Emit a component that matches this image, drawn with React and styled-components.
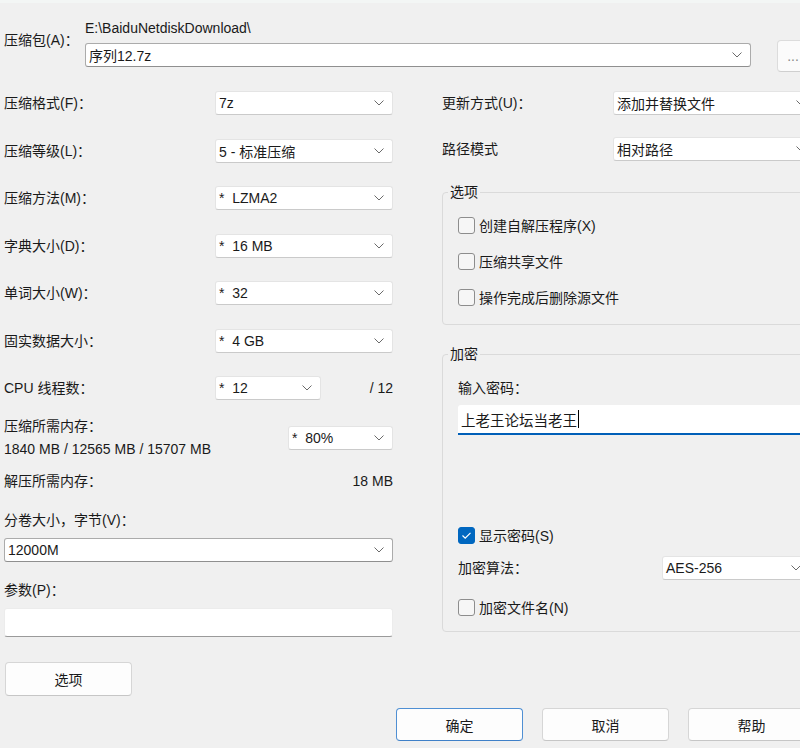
import styled, { createGlobalStyle } from 'styled-components';

const GlobalStyle = createGlobalStyle`
    html, body {
        margin: 0;
        padding: 0;
        overflow: hidden;
        background: #f0f0f0;
    }
    body {
        font-family: "Liberation Sans", "Noto Sans CJK SC", sans-serif;
        font-size: 14px;
        color: #1a1a1a;
    }
`;

const Dialog = styled.div`
    box-sizing: border-box;
    width: 830px;
    height: 748px;
    padding: 0 15px 0 4px;
    display: flex;
    flex-direction: column;
`;

const TitleStrip = styled.div`
    height: 3px;
    margin: 0 -15px 0 -4px;
    background: #f3f6f5;
`;

const TopRow = styled.div`
    display: flex;
    align-items: flex-start;
    margin-top: 16px;

    > * {
        flex-shrink: 0;
    }
`;

const TopLabel = styled.div`
    width: 81px;
    margin-top: 12px;
    line-height: 18px;
`;

const PathField = styled.div`
    width: 666px;
    display: flex;
    flex-direction: column;
    gap: 6px;
`;

const PathText = styled.div`
    line-height: 18px;
`;

const BrowseButton = styled.button`
    box-sizing: border-box;
    margin: 21px 0 0 26px;
    width: 32px;
    height: 32px;
    padding: 0;
    background: #fbfbfb;
    border: 1px solid #dcdcdc;
    border-bottom-color: #cfcfcf;
    border-radius: 4px;
    color: #8a8a8a;
    font: inherit;
`;

const Main = styled.div`
    display: flex;
    column-gap: 49px;
    margin-top: 19px;
`;

const LeftColumn = styled.div`
    width: 389px;
    display: flex;
    flex-direction: column;
`;

const RightColumn = styled.div`
    flex: 1;
    display: flex;
    flex-direction: column;
`;

const FieldRows = styled.div`
    display: flex;
    flex-direction: column;
    gap: ${(p) => p.$gap}px;
`;

const FieldRow = styled.div`
    display: grid;
    grid-template-columns: ${(p) => p.$cols};
    align-items: center;
    height: 24px;
    margin-top: ${(p) => p.$mt || 0}px;
`;

const Label = styled.div`
    line-height: 20px;
    white-space: nowrap;
    margin-top: ${(p) => p.$mt || 0}px;
    text-align: ${(p) => (p.$right ? 'right' : 'left')};
`;

const MemoryRow = styled.div`
    display: flex;
    align-items: center;
    justify-content: space-between;
    margin-top: 14.5px;
`;

const MemoryText = styled.div`
    line-height: 23px;
`;

const InfoRow = styled.div`
    display: flex;
    justify-content: space-between;
    line-height: 20px;
    margin-top: 10.5px;
`;

const ComboBox = styled.div`
    box-sizing: border-box;
    height: 24px;
    width: ${(p) => (p.$width ? `${p.$width}px` : '100%')};
    margin-top: ${(p) => p.$mt || 0}px;
    display: flex;
    align-items: center;
    justify-content: space-between;
    padding: 0 8px 0 3px;
    background: #ffffff;
    border: 1px solid ${(p) => (p.$editable ? '#ababab' : '#e4e4e4')};
    border-bottom-color: ${(p) => (p.$editable ? '#8f8f8f' : '#cacaca')};
    border-radius: 3px;
    justify-self: end;

    span {
        white-space: pre;
    }
`;

const TextInput = styled.div`
    box-sizing: border-box;
    height: 29px;
    margin-top: 8px;
    background: #ffffff;
    border: 1px solid #ececec;
    border-bottom-color: #9a9a9a;
    border-radius: 3px;
`;

const PasswordInput = styled.div`
    box-sizing: border-box;
    height: 30px;
    margin-top: 7px;
    padding-left: 3px;
    display: flex;
    align-items: center;
    background: #ffffff;
    border-bottom: 2px solid #005fb8;
    border-radius: 3px 3px 0 0;
    font-size: 14.5px;
`;

const Caret = styled.span`
    display: inline-block;
    width: 1px;
    height: 18px;
    margin-left: 1px;
    background: #000000;
`;

const PushButton = styled.button`
    box-sizing: border-box;
    width: 127px;
    height: ${(p) => p.$h || 33}px;
    margin: ${(p) => p.$margin || 0};
    padding: 0;
    background: #fdfdfd;
    border: 1px solid ${(p) => (p.$default ? '#4f8fd3' : '#d6d6d6')};
    border-bottom-color: ${(p) => (p.$default ? '#3f80c8' : '#c6c6c6')};
    border-radius: 4px;
    font: inherit;
    color: #1a1a1a;
`;

const GroupBox = styled.fieldset`
    margin: ${(p) => p.$mt}px 0 0;
    padding: 0 4px ${(p) => p.$pb}px 15px;
    border: 1px solid #dadada;
    border-radius: 4px;
    min-width: 0;
    display: flex;
    flex-direction: column;
`;

const Legend = styled.legend`
    margin-left: -10px;
    padding: 0 2px;
    line-height: 20px;
`;

const CheckRow = styled.label`
    display: flex;
    align-items: center;
    gap: 4px;
    height: 20px;
    margin-top: ${(p) => p.$mt || 0}px;
`;

const CheckBox = styled.span`
    box-sizing: border-box;
    width: 17px;
    height: 17px;
    display: inline-flex;
    align-items: center;
    justify-content: center;
    border-radius: 3px;
    border: 1px solid ${(p) => (p.$checked ? '#0067c0' : '#8d8d8d')};
    background: ${(p) => (p.$checked ? '#0067c0' : '#f6f6f6')};
`;

const BottomRow = styled.div`
    display: flex;
    justify-content: flex-end;
    gap: 19px;
    margin-top: 12px;
`;

function Chevron() {
    return (
        <svg width="10" height="6" viewBox="0 0 10 6">
            <path d="M0.5 0.5 L5 5 L9.5 0.5" fill="none" stroke="#6a6a6a" strokeWidth="1" />
        </svg>
    );
}

function Combo({ value, width, editable, mt }) {
    return (
        <ComboBox $width={width} $editable={editable} $mt={mt}>
            <span>{value}</span>
            <Chevron />
        </ComboBox>
    );
}

function Check({ checked, label, mt }) {
    return (
        <CheckRow $mt={mt}>
            <CheckBox $checked={checked}>
                {checked && (
                    <svg width="11" height="9" viewBox="0 0 11 9">
                        <path d="M1.5 4.5 L4.2 7.2 L9.5 1.8" fill="none" stroke="#ffffff" strokeWidth="1.2" />
                    </svg>
                )}
            </CheckBox>
            {label}
        </CheckRow>
    );
}

const leftFields = [
    ['压缩格式(F)：', '7z'],
    ['压缩等级(L)：', '5 - 标准压缩'],
    ['压缩方法(M)：', '*  LZMA2'],
    ['字典大小(D)：', '*  16 MB'],
    ['单词大小(W)：', '*  32'],
    ['固实数据大小：', '*  4 GB'],
];

export default function App() {
    return (
        <>
            <GlobalStyle />
            <Dialog>
                <TitleStrip />
                <TopRow>
                    <TopLabel>压缩包(A)：</TopLabel>
                    <PathField>
                        <PathText>{'E:\\BaiduNetdiskDownload\\'}</PathText>
                        <Combo value="序列12.7z" editable />
                    </PathField>
                    <BrowseButton>...</BrowseButton>
                </TopRow>

                <Main>
                    <LeftColumn>
                        <FieldRows $gap={23.5}>
                            {leftFields.map(([label, value]) => (
                                <FieldRow key={label} $cols="211px 178px">
                                    <Label>{label}</Label>
                                    <Combo value={value} width={178} />
                                </FieldRow>
                            ))}
                            <FieldRow $cols="211px 106px 1fr">
                                <Label>CPU 线程数：</Label>
                                <Combo value="*  12" width={106} />
                                <Label $right>/ 12</Label>
                            </FieldRow>
                        </FieldRows>

                        <MemoryRow>
                            <MemoryText>
                                压缩所需内存：
                                <br />
                                1840 MB / 12565 MB / 15707 MB
                            </MemoryText>
                            <Combo value="*  80%" width={105} />
                        </MemoryRow>

                        <InfoRow>
                            <span>解压所需内存：</span>
                            <span>18 MB</span>
                        </InfoRow>

                        <Label $mt={19}>分卷大小，字节(V)：</Label>
                        <Combo value="12000M" editable mt={8} />

                        <Label $mt={18}>参数(P)：</Label>
                        <TextInput />

                        <PushButton $h={34} $margin="25px 0 0 1px">
                            选项
                        </PushButton>
                    </LeftColumn>

                    <RightColumn>
                        <FieldRows $gap={22}>
                            <FieldRow $cols="171px 1fr">
                                <Label>更新方式(U)：</Label>
                                <Combo value="添加并替换文件" />
                            </FieldRow>
                            <FieldRow $cols="171px 1fr">
                                <Label>路径模式</Label>
                                <Combo value="相对路径" />
                            </FieldRow>
                        </FieldRows>

                        <GroupBox $mt={21} $pb={17}>
                            <Legend>选项</Legend>
                            <Check label="创建自解压程序(X)" mt={13} />
                            <Check label="压缩共享文件" mt={16} />
                            <Check label="操作完成后删除源文件" mt={16} />
                        </GroupBox>

                        <GroupBox $mt={19} $pb={14}>
                            <Legend>加密</Legend>
                            <Label $mt={14}>输入密码：</Label>
                            <PasswordInput>
                                上老王论坛当老王
                                <Caret />
                            </PasswordInput>
                            <Check checked label="显示密码(S)" mt={90} />
                            <FieldRow $cols="204px 1fr" $mt={11}>
                                <Label>加密算法：</Label>
                                <Combo value="AES-256" />
                            </FieldRow>
                            <Check label="加密文件名(N)" mt={17} />
                        </GroupBox>
                    </RightColumn>
                </Main>

                <BottomRow>
                    <PushButton $default>确定</PushButton>
                    <PushButton>取消</PushButton>
                    <PushButton>帮助</PushButton>
                </BottomRow>
            </Dialog>
        </>
    );
}
